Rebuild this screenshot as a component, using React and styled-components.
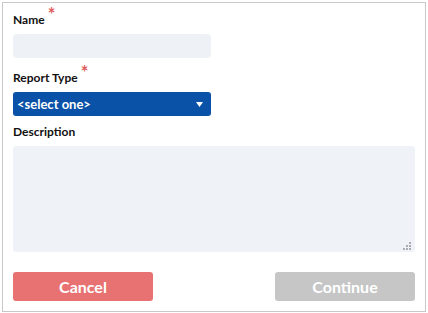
import React from "react";
import styled, { createGlobalStyle } from "styled-components";

const GlobalStyle = createGlobalStyle`
  html, body {
    margin: 0;
    padding: 0;
    background: #ffffff;
    font-family: Lato, "Open Sans", Arial, sans-serif;
  }
`;

const Page = styled.div`
  position: relative;
  width: 428px;
  height: 313px;
  overflow: hidden;
  background: #ffffff;
`;

const Dialog = styled.div`
  position: absolute;
  top: 2px;
  left: 2px;
  width: 424px;
  height: 310px;
  box-sizing: border-box;
  border: 1px solid #c8c8c8;
  background: #ffffff;
  padding: 9px 10px 10px;
  display: flex;
  flex-direction: column;
`;

const Field = styled.div`
  display: flex;
  flex-direction: column;
  margin-bottom: ${(p) => p.$space || 0}px;
`;

const Label = styled.label`
  display: block;
  font-size: 12px;
  line-height: 16px;
  font-weight: 700;
  color: #111111;
  margin-bottom: 6px;
`;

const Required = styled.span`
  position: relative;
  top: -3px;
  margin-left: 3px;
  color: #e05a5a;
  font-size: 18px;
  line-height: 0;
`;

const TextInput = styled.input`
  width: 198px;
  height: 24px;
  box-sizing: border-box;
  border: none;
  border-radius: 4px;
  background: #eef2f7;
  outline: none;
  padding: 0 6px;
  font-family: inherit;
`;

const SelectBox = styled.div`
  width: 198px;
  height: 24px;
  box-sizing: border-box;
  border-radius: 3px;
  background: #0a52a8;
  color: #ffffff;
  display: flex;
  align-items: center;
  justify-content: space-between;
  padding: 0 8px 0 4px;
  font-size: 13px;
  font-weight: 700;
  cursor: pointer;
`;

const AreaWrap = styled.div`
  position: relative;
  width: 402px;
  height: 106px;
`;

const TextArea = styled.textarea`
  width: 100%;
  height: 100%;
  box-sizing: border-box;
  border: none;
  border-radius: 3px;
  background: #eff3f8;
  resize: none;
  outline: none;
  font-family: inherit;
`;

const Grip = styled.svg`
  position: absolute;
  right: 4px;
  bottom: 2px;
`;

const Footer = styled.div`
  margin-top: auto;
  display: flex;
  justify-content: space-between;
`;

const Button = styled.button`
  width: 140px;
  height: 29px;
  border: none;
  border-radius: 3px;
  background: ${(p) => (p.$primary ? "#c6c6c6" : "#e87272")};
  color: #ffffff;
  font-family: inherit;
  font-size: 16px;
  font-weight: 700;
  cursor: pointer;
`;

const App = () => {
  return (
    <Page>
      <GlobalStyle />
      <Dialog>
        <Field $space={12}>
          <Label>
            Name<Required>*</Required>
          </Label>
          <TextInput type="text" />
        </Field>
        <Field $space={8}>
          <Label>
            Report Type<Required>*</Required>
          </Label>
          <SelectBox>
            <span>&lt;select one&gt;</span>
            <svg width="7" height="5" viewBox="0 0 7 5">
              <path d="M0 0 L7 0 L3.5 5 Z" fill="#ffffff" />
            </svg>
          </SelectBox>
        </Field>
        <Field>
          <Label>Description</Label>
          <AreaWrap>
            <TextArea />
            <Grip width="8" height="8" viewBox="0 0 8 8">
              <rect x="6" y="0" width="2" height="2" fill="#a9adb3" />
              <rect x="3" y="3" width="2" height="2" fill="#a9adb3" />
              <rect x="6" y="3" width="2" height="2" fill="#a9adb3" />
              <rect x="0" y="6" width="2" height="2" fill="#a9adb3" />
              <rect x="3" y="6" width="2" height="2" fill="#a9adb3" />
              <rect x="6" y="6" width="2" height="2" fill="#a9adb3" />
            </Grip>
          </AreaWrap>
        </Field>
        <Footer>
          <Button>Cancel</Button>
          <Button $primary>Continue</Button>
        </Footer>
      </Dialog>
    </Page>
  );
};

export default App;
